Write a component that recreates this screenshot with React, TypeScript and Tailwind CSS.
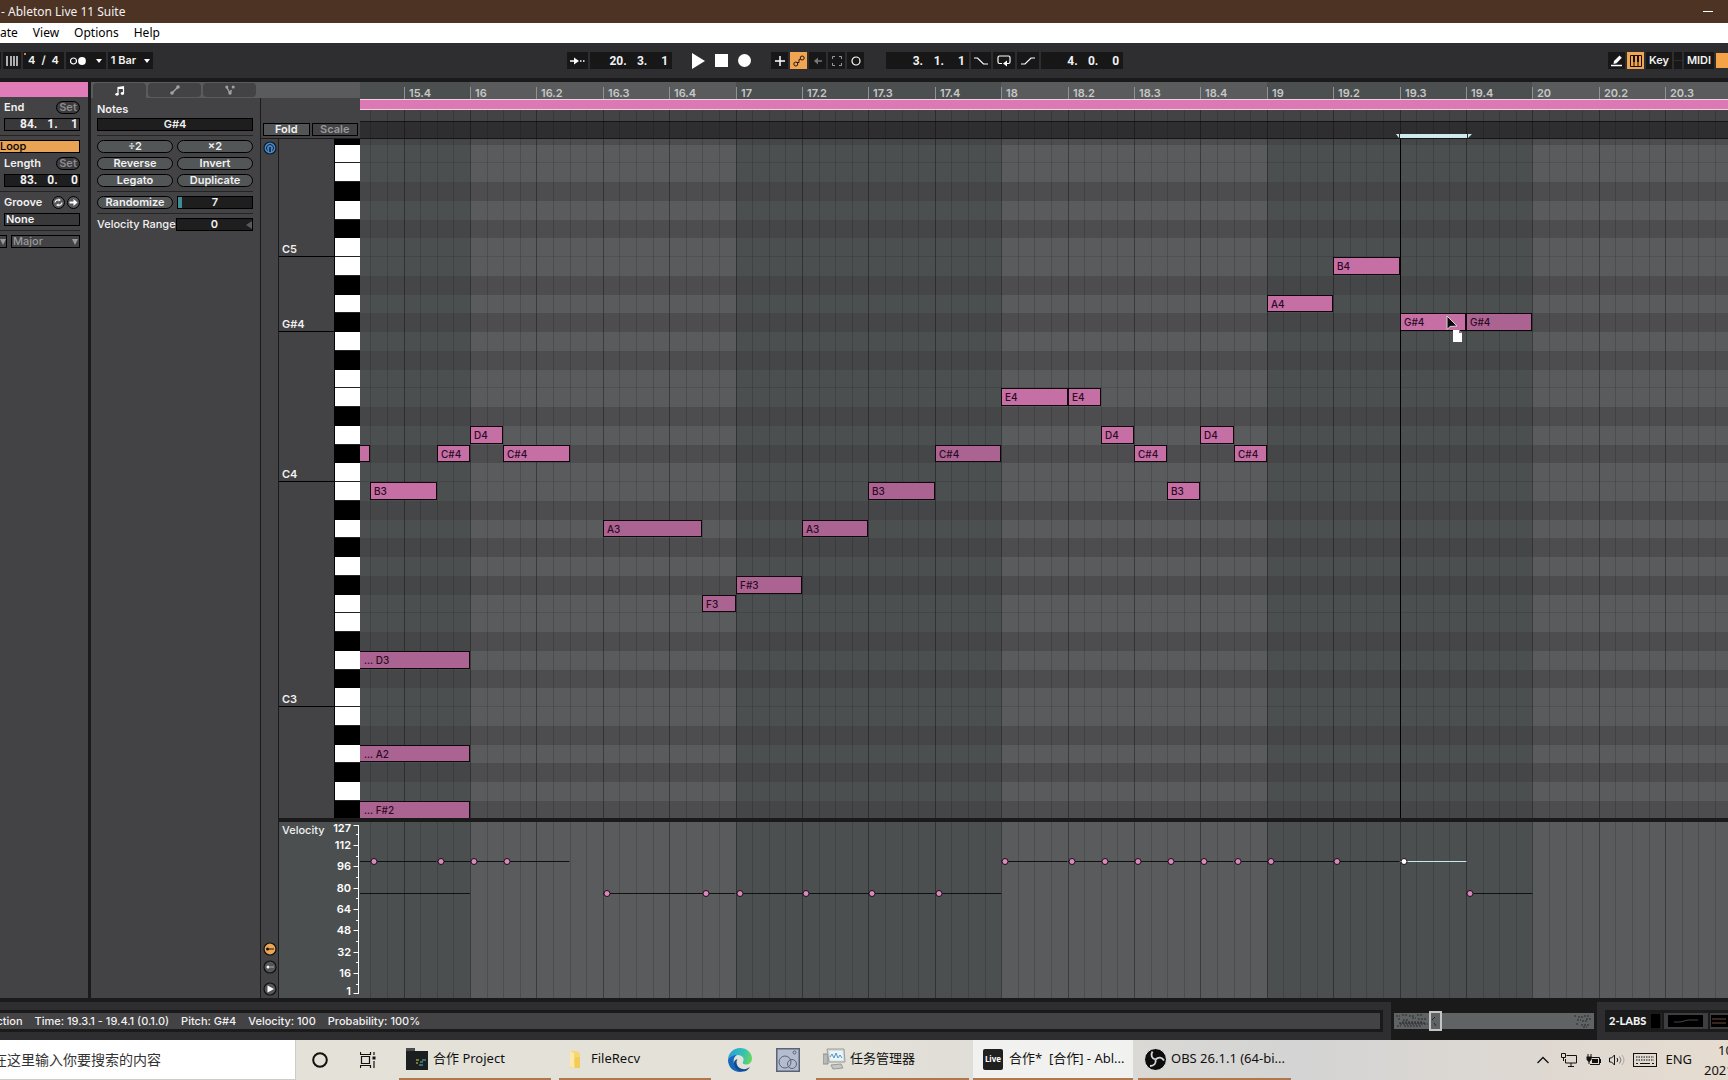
import type { ReactNode } from "react";
import clsx from "clsx";

const STEP = 16.6; // width of a sixteenth
const ORIGIN = 110; // x of bar 16 inside the lanes
const ROW = 18.75;
const TOP_PITCH = 78;
const NAMES = ["C", "C#", "D", "D#", "E", "F", "F#", "G", "G#", "A", "A#", "B"];

const x = (step: number) => Math.round(ORIGIN + step * STEP);
const y = (pitch: number) => Math.round(118 + (71 - pitch) * ROW);
const velY = (v: number) => Math.round(171 - ((v - 1) * 168) / 126);
const isBlack = (pitch: number) => NAMES[pitch % 12].includes("#");
const noteName = (pitch: number) =>
  NAMES[pitch % 12] + (Math.floor(pitch / 12) - 1);

const rows = Array.from({ length: 42 }, (_, i) => {
  const pitch = TOP_PITCH - i;
  const top = Math.max(0, y(pitch));
  return { pitch, height: y(pitch - 1) - top };
});

type Note = { start: number; len: number; pitch: number; vel: number };

const notes: Note[] = [
  { start: -8, len: 2, pitch: 61, vel: 100 },
  { start: -6, len: 4, pitch: 59, vel: 100 },
  { start: -2, len: 2, pitch: 61, vel: 100 },
  { start: 0, len: 2, pitch: 62, vel: 100 },
  { start: 2, len: 4, pitch: 61, vel: 100 },
  { start: 8, len: 6, pitch: 57, vel: 76 },
  { start: 14, len: 2, pitch: 53, vel: 76 },
  { start: 16, len: 4, pitch: 54, vel: 76 },
  { start: 20, len: 4, pitch: 57, vel: 76 },
  { start: 24, len: 4, pitch: 59, vel: 76 },
  { start: 28, len: 4, pitch: 61, vel: 76 },
  { start: 32, len: 4, pitch: 64, vel: 100 },
  { start: 36, len: 2, pitch: 64, vel: 100 },
  { start: 38, len: 2, pitch: 62, vel: 100 },
  { start: 40, len: 2, pitch: 61, vel: 100 },
  { start: 42, len: 2, pitch: 59, vel: 100 },
  { start: 44, len: 2, pitch: 62, vel: 100 },
  { start: 46, len: 2, pitch: 61, vel: 100 },
  { start: 48, len: 4, pitch: 69, vel: 100 },
  { start: 52, len: 4, pitch: 71, vel: 100 },
  { start: 56, len: 4, pitch: 68, vel: 100 },
  { start: 60, len: 4, pitch: 68, vel: 76 },
  { start: -16, len: 16, pitch: 50, vel: 76 },
  { start: -16, len: 16, pitch: 45, vel: 76 },
  { start: -16, len: 16, pitch: 42, vel: 76 },
];

const SELECTED = 56;

function BarShades() {
  return (
    <>
      {[-16, 0, 16, 32, 48, 64].map((start) => {
        const left = Math.max(0, x(start));
        const end = start === 64 ? 4000 : x(start + 16);
        return (
          <div
            key={start}
            className={clsx(
              "absolute inset-y-0",
              (start / 16) % 2 === 0 ? "bg-[#595b5c]" : "bg-[#4b4f50]",
            )}
            style={{ left, width: end - left }}
          />
        );
      })}
    </>
  );
}

function GridLines() {
  return (
    <>
      {Array.from({ length: 170 }, (_, i) => i - 6).map((s) => (
        <div
          key={s}
          className={clsx(
            "absolute inset-y-0 w-px",
            s % 4 === 0 ? "bg-black/35" : "bg-black/15",
          )}
          style={{ left: x(s) }}
        />
      ))}
    </>
  );
}

function Ruler() {
  return (
    <div className="relative h-[17px] overflow-hidden">
      <BarShades />
      {Array.from({ length: 20 }, (_, i) => i - 1).map((beat) => {
        const bar = 16 + Math.floor(beat / 4);
        const sub = ((beat + 4) % 4) + 1;
        return (
          <div
            key={beat}
            className="absolute bottom-0 h-3 border-l border-[#8f9293] pl-1 text-[11px] leading-[13px] font-semibold text-[#c6c8c8]"
            style={{ left: x(beat * 4) }}
          >
            {sub === 1 ? bar : `${bar}.${sub}`}
          </div>
        );
      })}
    </div>
  );
}

function Roll() {
  return (
    <div className="relative min-h-0 flex-1 overflow-hidden">
      <BarShades />
      <div className="relative">
        {rows.map((r) => (
          <div
            key={r.pitch}
            className={clsx(
              isBlack(r.pitch) && "bg-[#3c3a3c]/40",
              (r.pitch % 12 === 0 || r.pitch % 12 === 5) &&
                "border-b border-black/10",
            )}
            style={{ height: r.height }}
          />
        ))}
      </div>
      <GridLines />
      {notes.map((n) => {
        const left = Math.max(-1, x(n.start));
        const clipped = n.start === -16;
        return (
          <div
            key={`${n.start}-${n.pitch}`}
            className={clsx(
              "absolute overflow-hidden border border-[#12060d] text-[10px] leading-4 font-medium whitespace-nowrap text-[#2b0a1f]",
              n.vel === 100 ? "bg-[#c56fa5]" : "bg-[#ab6492]",
              clipped ? "pl-1" : "pl-[3px]",
            )}
            style={{
              left,
              width: x(n.start + n.len) - left,
              top: y(n.pitch),
              height: y(n.pitch - 1) - y(n.pitch) - 1,
            }}
          >
            {n.start !== -8 && (clipped ? "... " : "") + noteName(n.pitch)}
          </div>
        );
      })}
      <div
        className="absolute inset-y-0 w-px bg-black"
        style={{ left: x(SELECTED) }}
      />
      <svg
        className="absolute h-8 w-5"
        style={{ left: x(SELECTED) + 46, top: y(68) + 2 }}
        viewBox="0 0 20 32"
      >
        <path
          d="M1 1v13.5l3.2-3 6.8-.5z"
          fill="#0c0c0c"
          stroke="#d8d8d8"
          strokeWidth="1"
        />
        <path d="M7 15h6l3 3v9H7z" fill="#fff" />
        <path d="M13 15v3h3z" fill="#777" />
      </svg>
    </div>
  );
}

function VelocityLane() {
  return (
    <div className="relative h-44 shrink-0 overflow-hidden">
      <BarShades />
      <GridLines />
      <svg className="absolute inset-0 h-full w-full">
        {notes.map((n) => (
          <rect
            key={`l${n.start}-${n.pitch}`}
            x={x(n.start)}
            y={velY(n.vel)}
            width={n.len * STEP}
            height="1"
            fill={n.start === SELECTED ? "#c9e6ec" : "#111"}
          />
        ))}
        {notes.map((n) => (
          <circle
            key={`c${n.start}-${n.pitch}`}
            cx={x(n.start) + 4}
            cy={velY(n.vel) + 0.5}
            r="3"
            fill={n.start === SELECTED ? "#fff" : "#d98abb"}
            stroke="#1c0d16"
          />
        ))}
      </svg>
    </div>
  );
}

function VelocityScale() {
  const labels = [127, 112, 96, 80, 64, 48, 32, 16, 1];
  return (
    <div className="flex h-44 shrink-0 justify-between bg-[#4b4f50] pl-[3px] text-[11px]">
      <span className="w-0 pt-0.5 leading-3 font-medium">Velocity</span>
      <svg className="h-44 w-9" viewBox="0 0 36 176">
        <path d="M34.5 3v169" stroke="#fff" />
        {labels.map((v) => (
          <g key={v}>
            <path d={`M29.5 ${velY(v) + 0.5}h5`} stroke="#fff" />
            <text
              x="27"
              y={velY(v) + (v === 127 ? 7 : v === 1 ? 2 : 4)}
              textAnchor="end"
              fill="#fff"
              fontSize="11"
              fontWeight="600"
            >
              {v}
            </text>
          </g>
        ))}
        {[120, 104, 88, 72, 56, 40, 24, 8].map((v) => (
          <path key={v} d={`M32 ${velY(v) + 0.5}h3`} stroke="#fff" />
        ))}
      </svg>
    </div>
  );
}

function Pill({ children, dim }: { children: ReactNode; dim?: boolean }) {
  return (
    <button
      className={clsx(
        "h-[13px] rounded-full border border-black text-center text-[11px] leading-[11px] font-semibold",
        dim ? "w-6 bg-[#3c3b3d] text-[#8c8c8e]" : "flex-1 bg-[#535657] text-[#f1f1f1]",
      )}
    >
      {children}
    </button>
  );
}

function Position({ parts, className }: { parts: string[]; className?: string }) {
  return (
    <div className={clsx("flex font-['Roboto'] font-bold", className)}>
      {parts.map((p, i) => (
        <span key={i} className="flex-1 text-right whitespace-pre">
          {p}
        </span>
      ))}
    </div>
  );
}

const Rule = () => <hr className="h-px border-0 bg-[#232324]" />;

function ClipPanel() {
  return (
    <div className="flex w-[88px] shrink-0 flex-col overflow-hidden text-[11px] leading-[13px] font-semibold">
      <div className="h-[15px] bg-[#e07cb8]" />
      <div className="flex flex-col gap-1 pt-1 pr-2">
        <div className="flex justify-between pl-1">
          <span>End</span>
          <Pill dim>Set</Pill>
        </div>
        <Position
          parts={["84.", "1.", "1"]}
          className="ml-1 h-[13px] border border-black bg-[#39383a] pr-px pl-3 text-[12px] leading-[11px]"
        />
        <Rule />
        <button className="h-[13px] border border-l-0 border-black bg-[#e8a355] text-left text-[11px] leading-[11px] font-medium text-black">
          Loop
        </button>
        <div className="flex justify-between pl-1">
          <span>Length</span>
          <Pill dim>Set</Pill>
        </div>
        <Position
          parts={["83.", "0.", "0"]}
          className="ml-1 h-[13px] border border-black bg-[#1e1e1f] pr-px pl-3 text-[12px] leading-[11px]"
        />
        <Rule />
        <div className="flex h-[13px] items-center justify-between pl-1">
          <span className="w-0">Groove</span>
          <span className="flex gap-0.5">
            <button aria-label="Hot-swap groove">
              <svg className="size-[13px]" viewBox="0 0 13 13">
                <circle cx="6.5" cy="6.5" r="6" fill="#59595b" stroke="#000" />
                <path
                  d="M3 6.5a3 3 0 0 1 4-2.5M10 6.5a3 3 0 0 1-4 2.5"
                  fill="none"
                  stroke="#fff"
                  strokeWidth="1.2"
                />
                <path d="M6.5 2.500l2.500 1.500-2.500 1.500zM6.5 7.500l-2.500 1.500 2.500 1.500z" fill="#fff" />
              </svg>
            </button>
            <button aria-label="Commit groove">
              <svg className="size-[13px]" viewBox="0 0 13 13">
                <circle cx="6.5" cy="6.5" r="6" fill="#59595b" stroke="#000" />
                <path d="M2.5 6.5h5" stroke="#fff" strokeWidth="2" />
                <path d="M6.5 3l4 3.5-4 3.5z" fill="#fff" />
              </svg>
            </button>
          </span>
        </div>
        <div className="ml-1 h-[13px] border border-black bg-[#39383a] pl-px leading-[11px]">
          None
        </div>
        <Rule />
        <div className="flex gap-1 text-[#98989a]">
          <span className="flex h-[13px] w-[7px] items-center justify-end border border-l-0 border-black">
            <svg className="h-1.5 w-1.5 shrink-0" viewBox="0 0 6 6">
              <path d="M0 0h6L3 6z" fill="currentColor" />
            </svg>
          </span>
          <span className="flex h-[13px] flex-1 items-center justify-between border border-black px-px leading-[11px] font-medium">
            Major
            <svg className="h-1.5 w-1.5" viewBox="0 0 6 6">
              <path d="M0 0h6L3 6z" fill="currentColor" />
            </svg>
          </span>
        </div>
      </div>
    </div>
  );
}

function NotesPanel() {
  return (
    <div className="flex w-[170px] shrink-0 flex-col gap-1 border-r border-[#1a1a1b] pt-[3px] pr-[7px] pl-1.5 text-[11px] leading-[13px] font-semibold">
      <div className="h-[13px] leading-4">Notes</div>
      <div className="h-[13px] border border-black bg-[#1e1e1f] text-center leading-[11px]">
        G#4
      </div>
      <Rule />
      <div className="flex gap-1">
        <Pill>÷2</Pill>
        <Pill>×2</Pill>
      </div>
      <div className="flex gap-1">
        <Pill>Reverse</Pill>
        <Pill>Invert</Pill>
      </div>
      <div className="flex gap-1">
        <Pill>Legato</Pill>
        <Pill>Duplicate</Pill>
      </div>
      <Rule />
      <div className="flex gap-1">
        <Pill>Randomize</Pill>
        <div className="flex h-[13px] flex-1 border border-black bg-[#1e1e1f] leading-[11px]">
          <span className="w-1 bg-[#3d8e94]" />
          <span className="flex-1 pr-1 text-center">7</span>
        </div>
      </div>
      <Rule />
      <div className="flex gap-1">
        <span className="w-0 flex-1 font-medium whitespace-nowrap">
          Velocity Range
        </span>
        <div className="flex h-[13px] flex-1 items-center border border-black bg-[#1e1e1f] leading-[11px]">
          <span className="flex-1 pl-1.5 text-center">0</span>
          <svg className="h-2 w-1.5" viewBox="0 0 6 8">
            <path d="M6 0v8L0 4z" fill="#59595b" />
          </svg>
        </div>
      </div>
    </div>
  );
}

function TabStrip() {
  const tab =
    "flex h-3.5 w-[53px] items-center justify-center rounded bg-[#434244] text-[#a2a3a4]";
  return (
    <div className="flex h-4 items-start gap-0.5 bg-[#595b5c] pt-px pl-0.5">
      <button
        aria-label="Notes"
        className="flex h-[15px] w-[53px] items-center justify-center rounded-t bg-[#434244] text-white"
      >
        <svg className="h-2.5 w-2.5" viewBox="0 0 10 10">
          <path
            d="M3 8V1.5L8.5.8V7"
            fill="none"
            stroke="currentColor"
            strokeWidth="1.2"
          />
          <path d="M3 1h5.500v2H3z" fill="currentColor" />
          <ellipse cx="2" cy="8.300" rx="1.700" ry="1.400" fill="currentColor" />
          <ellipse cx="7.400" cy="7.500" rx="1.700" ry="1.400" fill="currentColor" />
        </svg>
      </button>
      <button aria-label="Envelopes" className={tab}>
        <svg className="h-2.5 w-2.5" viewBox="0 0 10 10">
          <path d="M2 8l6-6" stroke="currentColor" strokeWidth="1.4" />
          <circle cx="2" cy="8" r="1.800" fill="currentColor" />
          <circle cx="8" cy="2" r="1.800" fill="currentColor" />
        </svg>
      </button>
      <button aria-label="MPE" className={tab}>
        <svg className="h-2.5 w-2.5" viewBox="0 0 10 10">
          <path
            d="M1.500 2L5 8l1.500-3M8.500 2L8 3"
            fill="none"
            stroke="currentColor"
            strokeWidth="1.4"
          />
          <circle cx="1.800" cy="2" r="1.500" fill="currentColor" />
          <circle cx="8.200" cy="2" r="1.500" fill="currentColor" />
          <circle cx="5" cy="8" r="1.700" fill="currentColor" />
        </svg>
      </button>
    </div>
  );
}

function IconColumn() {
  return (
    <div className="flex w-[18px] shrink-0 flex-col items-center border-r border-[#1a1a1b] pt-0.5 pb-0.5">
      <button aria-label="Preview">
        <svg className="size-3.5" viewBox="0 0 14 14">
          <circle cx="7" cy="7" r="6" fill="#4a86c4" stroke="#0d1a2a" strokeWidth="1.2" />
          <path
            d="M4.500 9.500a3.500 3.500 0 1 1 5 0"
            fill="none"
            stroke="#0e2440"
            strokeWidth="1"
          />
          <path d="M7 6v5" stroke="#0e2440" strokeWidth="1.600" />
        </svg>
      </button>
      <div className="flex-1" />
      <button aria-label="Velocity lane" className="mb-1">
        <svg className="size-3.5" viewBox="0 0 14 14">
          <circle cx="7" cy="7" r="6" fill="#eba556" stroke="#111" strokeWidth="1.200" />
          <path d="M4 7h7" stroke="#221405" />
          <circle cx="4.500" cy="7" r="1.500" fill="#221405" />
        </svg>
      </button>
      <button aria-label="Chance lane" className="mb-2">
        <svg className="size-3.5" viewBox="0 0 14 14">
          <circle cx="7" cy="7" r="6" fill="#535657" stroke="#111" strokeWidth="1.200" />
          <circle cx="5" cy="7" r="1.500" fill="#fff" />
          <path d="M7.500 7h1M9.500 7h1" stroke="#fff" />
        </svg>
      </button>
      <button aria-label="Show lanes">
        <svg className="size-3.5" viewBox="0 0 14 14">
          <circle cx="7" cy="7" r="6" fill="#535657" stroke="#111" strokeWidth="1.200" />
          <path d="M4.500 3.500v7L11 7z" fill="#fff" />
        </svg>
      </button>
    </div>
  );
}

function Keyboard() {
  return (
    <div className="flex min-h-0 flex-1 overflow-hidden">
      <div className="w-[55px] shrink-0 text-[11px] leading-3 font-semibold">
        {rows.map((r) => {
          const labelled = r.pitch % 12 === 0 || r.pitch === 68;
          return (
            <div
              key={r.pitch}
              className={clsx(
                "flex items-end pb-px pl-[3px]",
                labelled && "border-b border-black",
              )}
              style={{ height: r.height }}
            >
              {labelled && noteName(r.pitch)}
            </div>
          );
        })}
      </div>
      <div className="flex-1 border-l border-black">
        {rows.map((r) => (
          <div
            key={r.pitch}
            className={
              isBlack(r.pitch) ? "bg-black" : "border-b border-[#222] bg-white"
            }
            style={{ height: r.height }}
          />
        ))}
      </div>
    </div>
  );
}

function ClipEditor() {
  return (
    <div className="flex min-h-0 flex-1">
      <ClipPanel />
      <div className="w-[3px] shrink-0 bg-[#1a1a1b]" />
      <div className="flex w-[269px] shrink-0 flex-col">
        <TabStrip />
        <div className="flex min-h-0 flex-1">
          <NotesPanel />
          <div className="flex min-w-0 flex-1 flex-col">
            <div className="flex h-[41px] items-end gap-0.5 border-b border-[#1a1a1b] px-0.5 pb-0.5 text-[11px] leading-[11px] font-semibold">
              <button className="h-[13px] flex-1 border border-black bg-[#535657]">
                Fold
              </button>
              <button className="h-[13px] flex-1 border border-black text-[#98989a]">
                Scale
              </button>
            </div>
            <div className="flex min-h-0 flex-1">
              <IconColumn />
              <div className="flex min-w-0 flex-1 flex-col">
                <Keyboard />
                <div className="h-1 shrink-0 bg-[#1a1a1b]" />
                <VelocityScale />
              </div>
            </div>
          </div>
        </div>
      </div>
      <div className="flex min-w-0 flex-1 flex-col">
        <Ruler />
        <div className="h-[11px] border-y border-[#f0cfe2] bg-[#dc79b5]" />
        <div className="relative h-3 overflow-hidden border-b border-[#151515]">
          <GridLines />
        </div>
        <div className="relative h-[17px] overflow-hidden border-b border-[#151515] bg-[#2e2d2f]">
          <GridLines />
          <svg
            className="absolute bottom-0 h-1 w-[76px]"
            style={{ left: x(SELECTED) - 4 }}
            viewBox="0 0 76 4"
          >
            <path d="M4 0h67v4H4zM0 0h3v4zM76 0h-4v4z" fill="#cfe9ee" />
          </svg>
        </div>
        <Roll />
        <div className="h-1 shrink-0 bg-[#1a1a1b]" />
        <VelocityLane />
      </div>
    </div>
  );
}

const box = "flex h-[17px] items-center justify-center bg-[#171717]";

function Caret() {
  return (
    <svg className="h-1 w-1.5" viewBox="0 0 6 4">
      <path d="M0 0h6L3 4z" fill="#fff" />
    </svg>
  );
}

function ControlBar() {
  return (
    <div className="flex h-[35px] shrink-0 items-center overflow-hidden bg-[#2e2d2f] text-[11px] font-semibold">
      <div className="flex gap-0.5">
        <div className="h-[17px] w-px bg-[#171717]" />
        <button aria-label="Metronome" className={clsx(box, "w-[18px]")}>
          <svg className="h-2.5 w-3" viewBox="0 0 12 10">
            <path
              d="M1 0v10M5 0v10M8 0v10M11 0v10"
              stroke="#fff"
              strokeWidth="1.300"
            />
          </svg>
        </button>
        <div className={clsx(box, "relative w-[41px] gap-1.5")}>
          <span>4</span>
          <span>/</span>
          <span>4</span>
          <i className="absolute top-px left-px size-0.5 bg-[#e07a50]" />
        </div>
        <button aria-label="Groove amount" className={clsx(box, "w-10 gap-2.5")}>
          <svg className="h-2 w-4" viewBox="0 0 16 8">
            <circle cx="3.500" cy="4" r="3" fill="none" stroke="#fff" strokeWidth="1.200" />
            <circle cx="12" cy="4" r="3.900" fill="#fff" />
          </svg>
          <Caret />
        </button>
        <button className={clsx(box, "w-[45px] gap-2 whitespace-nowrap")}>
          1 Bar
          <Caret />
        </button>
      </div>
      <div className="ml-[414px] flex gap-0.5">
        <button aria-label="Follow" className={clsx(box, "w-[21px]")}>
          <svg className="h-2 w-4" viewBox="0 0 16 8">
            <path d="M0 4h5M10 4h1.500M13 4h1.500" stroke="#fff" strokeWidth="1.500" />
            <path d="M4 .5L9 4 4 7.500z" fill="#fff" />
          </svg>
        </button>
        <Position
          parts={["20.", "3.", "1"]}
          className="h-[17px] w-[82px] items-center bg-[#171717] pr-1 pl-4 text-[12px]"
        />
      </div>
      <div className="ml-5 flex items-center gap-2.5">
        <button aria-label="Play">
          <svg className="h-4 w-[13px]" viewBox="0 0 13 16">
            <path d="M0 0l13 8-13 8z" fill="#fff" />
          </svg>
        </button>
        <button aria-label="Stop" className="size-[13px] bg-white" />
        <button aria-label="Record" className="size-[13px] rounded-full bg-white" />
      </div>
      <div className="ml-5 flex gap-0.5">
        <button aria-label="Overdub" className={clsx(box, "w-[17px]")}>
          <svg className="size-2.5" viewBox="0 0 10 10">
            <path d="M5 0v10M0 5h10" stroke="#fff" strokeWidth="1.500" />
          </svg>
        </button>
        <button
          aria-label="Automation arm"
          className="flex h-[17px] w-[17px] items-center justify-center bg-[#f0a555]"
        >
          <svg className="size-3" viewBox="0 0 12 12" fill="none" stroke="#2a1604">
            <circle cx="2.800" cy="9" r="2" />
            <circle cx="9.200" cy="3" r="2" />
            <path d="M4 7.500h2v-3h1.500" />
          </svg>
        </button>
        <button aria-label="Re-enable automation" className={clsx(box, "w-[17px]")}>
          <svg className="h-2 w-2.5" viewBox="0 0 10 8">
            <path d="M3 4h6" stroke="#77787a" strokeWidth="1.500" />
            <path d="M5 .5L1 4l4 3.500z" fill="#77787a" />
          </svg>
        </button>
        <button aria-label="Capture" className={clsx(box, "w-[17px]")}>
          <svg className="size-2.5" viewBox="0 0 10 10" fill="none" stroke="#9a9b9c">
            <path d="M.5 3V.5H3M7 .5h2.500V3M9.500 7v2.500H7M3 9.500H.5V7" />
          </svg>
        </button>
        <button aria-label="Session record" className={clsx(box, "w-[17px]")}>
          <svg className="size-2.5" viewBox="0 0 10 10">
            <circle cx="5" cy="5" r="4" fill="none" stroke="#fff" strokeWidth="1.200" />
          </svg>
        </button>
      </div>
      <div className="ml-[22px] flex gap-0.5">
        <Position
          parts={["3.", "1.", "1"]}
          className="h-[17px] w-[83px] items-center bg-[#171717] pr-1 pl-4 text-[12px]"
        />
        <button aria-label="Punch in" className={clsx(box, "w-5")}>
          <svg className="h-2 w-3.5" viewBox="0 0 14 8" fill="none" stroke="#fff">
            <path d="M0 1h3.500l6 6H14" strokeWidth="1.200" />
          </svg>
        </button>
        <button aria-label="Loop" className={clsx(box, "w-[22px]")}>
          <svg className="h-3 w-3.5" viewBox="0 0 14 12">
            <path
              d="M5 8.500H2.500a1.500 1.500 0 0 1-1.500-1.500V2.500A1.500 1.500 0 0 1 2.500 1h9A1.500 1.500 0 0 1 13 2.500V7a1.500 1.500 0 0 1-1.500 1.500H9"
              fill="none"
              stroke="#fff"
              strokeWidth="1.200"
            />
            <path d="M10 5.500v6L6 8.500z" fill="#fff" />
          </svg>
        </button>
        <button aria-label="Punch out" className={clsx(box, "w-[22px]")}>
          <svg className="h-2 w-3.5" viewBox="0 0 14 8" fill="none" stroke="#fff">
            <path d="M0 7h4l6-6h4" strokeWidth="1.200" />
          </svg>
        </button>
        <Position
          parts={["4.", "0.", "0"]}
          className="h-[17px] w-[82px] items-center bg-[#171717] pr-1 pl-4 text-[12px]"
        />
      </div>
      <div className="ml-auto flex gap-0.5">
        <button aria-label="Draw mode" className={clsx(box, "w-[17px]")}>
          <svg className="h-3 w-3" viewBox="0 0 12 12">
            <path d="M2.500 9l.5-3L8.500.5l2.300 2.300L5.500 8.300z" fill="#fff" />
            <path d="M0 10.500h11" stroke="#fff" strokeWidth="1.500" />
          </svg>
        </button>
        <button
          aria-label="Computer MIDI keyboard"
          className="flex h-[17px] w-[17px] items-center justify-center bg-[#f0a555]"
        >
          <svg className="h-3 w-3" viewBox="0 0 12 12">
            <path
              d="M.5 .5h11v11H.5zM4 6v5.500M8 6v5.500"
              fill="none"
              stroke="#1a0f04"
            />
            <path d="M3 1h2v6H3zM7 1h2v6H7z" fill="#1a0f04" />
          </svg>
        </button>
        <button className={clsx(box, "w-[26px]")}>Key</button>
        <div className={clsx(box, "w-2 flex-col gap-px")}>
          <i className="h-px w-full bg-[#2e2d2f]" />
        </div>
        <button className={clsx(box, "w-[30px]")}>MIDI</button>
        <div className="h-[15px] w-3 self-center bg-[#f5a347]" />
      </div>
    </div>
  );
}

function StatusBar() {
  return (
    <div className="flex h-[42px] shrink-0 border-t-4 border-[#1a1a1b] bg-[#2e2d2f]">
      <div className="min-w-0 flex-1 py-2 pr-2">
        <div className="flex h-[22px] gap-3 overflow-hidden border-3 border-l-0 border-[#1a1a1b] bg-[#434244] text-[11px] leading-4 font-medium whitespace-nowrap">
          <span className="-ml-2.5">ection</span>
          <span>Time: 19.3.1 - 19.4.1 (0.1.0)</span>
          <span>Pitch: G#4</span>
          <span>Velocity: 100</span>
          <span>Probability: 100%</span>
        </div>
      </div>
      <div className="w-[206px] bg-[#1a1a1b] px-[3px] pt-[9px]">
        <svg className="h-5 w-[200px]" viewBox="0 0 200 20">
          <rect y="2" width="200" height="16" fill="#5f6364" />
          <path
            d="M2 5h4M8 4h5M15 5h6M23 4h5M4 8h3M9 9h6M18 7h4M24 8h8M5 12h26M6 13h28M8 11h20M3 15h4M10 15h18M180 5h3M184 6h5M190 5h5M183 9h4M188 10h6M182 13h3M187 14h8M192 8h5M189 16h4"
            stroke="#2a2b2c"
            strokeDasharray="2 1"
          />
          <path d="M38 9l3-3M40 12l2 3" stroke="#2a2b2c" />
          <rect x="36" y="1" width="11" height="18" fill="none" stroke="#c3c4c4" strokeWidth="2" />
        </svg>
      </div>
      <div className="w-[131px] py-2 pl-2">
        <div className="flex h-[22px] items-center gap-1 overflow-hidden bg-[#1a1a1b] pl-1 font-['Lato'] text-[11px] font-black whitespace-nowrap">
          2-LABS
          <svg className="h-4 w-[80px] shrink-0" viewBox="0 0 80 16">
            <rect width="11" height="16" fill="#000" stroke="#333" />
            <rect x="14" width="44" height="16" fill="#3d3e3f" />
            <rect x="18" y="2" width="35" height="12" fill="#000" />
            <path d="M24 9h6l8-2h10" stroke="#444" fill="none" />
            <rect x="60" width="20" height="16" fill="#3d3e3f" />
            <rect x="61" y="2" width="18" height="12" fill="#000" />
            <path d="M62 6h14M62 10h14" stroke="#6a4a3c" />
          </svg>
        </div>
      </div>
    </div>
  );
}

function Task({
  icon,
  label,
  active,
  className,
}: {
  icon: ReactNode;
  label: string;
  active?: boolean;
  className?: string;
}) {
  return (
    <button
      className={clsx(
        "flex h-10 shrink-0 items-center border-b-2 border-[#b0764c] text-left whitespace-pre",
        active ? "bg-[#f1f1ef]" : "",
        className,
      )}
    >
      {icon}
      {label}
    </button>
  );
}

function TaskBar() {
  return (
    <div className="flex h-10 shrink-0 items-center overflow-hidden bg-linear-to-r from-[#e3e1d8] from-50% via-[#d4d4d4] via-75% to-[#e6dcd0] font-['Noto_Sans','Noto_Sans_CJK_SC',sans-serif] text-[13px] text-[#111]">
      <input
        aria-label="Search"
        placeholder="在这里输入你要搜索的内容"
        className="-ml-[7px] h-10 w-[303px] shrink-0 border-r border-b border-[#cfccc5] bg-white text-[14px] placeholder:text-[#333]"
      />
      <button aria-label="Cortana" className="ml-4">
        <svg className="size-4" viewBox="0 0 16 16">
          <circle cx="8" cy="8" r="6.800" fill="none" stroke="#111" strokeWidth="2" />
        </svg>
      </button>
      <button aria-label="Task view" className="ml-8">
        <svg className="size-4" viewBox="0 0 16 16" fill="none" stroke="#111">
          <path d="M.5 0v2.500h10V0M.5 16v-2.500h10V16M1.500 4.500h8v7h-8zM14 0v3M14 9v7" strokeWidth="1.200" />
          <rect x="12.500" y="4.500" width="3" height="3" fill="#111" stroke="none" />
        </svg>
      </button>
      <Task
        className="ml-[23px] w-[152px] gap-[5px] pl-[7px]"
        label="合作 Project"
        icon={
          <svg className="h-[22px] w-[22px]" viewBox="0 0 22 22">
            <path d="M0 0h9v3h13v19H0z" fill="#1c1f1f" />
            <path d="M0 0h9v3H0z" fill="#4a4a48" />
            <path d="M10 12h3M10 15h2" stroke="#d8d44a" />
            <path d="M14 14h3M16 12h4M13 17h4" stroke="#5bb7c4" />
          </svg>
        }
      />
      <Task
        className="ml-2 w-[152px] gap-2.5 pl-2.5"
        label="FileRecv"
        icon={
          <svg className="h-[19px] w-3" viewBox="0 0 12 19">
            <path d="M1 1h6l4 2v15H1z" fill="#f7d774" />
            <path d="M1 1l4 2v15l-4-1z" fill="#fbe9a9" />
            <path d="M6 7h5v11H6z" fill="#f3cb58" />
          </svg>
        }
      />
      <button aria-label="Microsoft Edge" className="ml-[17px]">
        <svg className="size-6" viewBox="0 0 24 24">
          <defs>
            <linearGradient id="edgeTop" x1="0" y1="0.4" x2="1" y2="0.6">
              <stop offset="0" stopColor="#2b9fd9" />
              <stop offset="0.600" stopColor="#35c1b4" />
              <stop offset="1" stopColor="#6bd65a" />
            </linearGradient>
          </defs>
          <path
            d="M0 12C0 5 5.500 0 12 0c7 0 12 5 12 10.500 0 4-3 6-6 6-2.500 0-4-1-3-2.500C17 10 14 7 9.500 7 5 7 1 9 0 12z"
            fill="url(#edgeTop)"
          />
          <path
            d="M0 12c1-3 4.500-5 9-5-3 1.500-4 5-3 8.500C7.500 20 11 22.500 15 23c-1 .7-2 1-3 1C5 24 0 18.500 0 12z"
            fill="#1768b8"
          />
          <path
            d="M9.500 11c-2 3-1 8 4 9.800 3 1 6 .2 8.500-2-1.500 3-4 4.700-7 4.700-5 0-8.500-3.500-9-7.500-.3-2.500.8-4.500 3.500-5z"
            fill="#134a92"
          />
        </svg>
      </button>
      <button aria-label="Audio app" className="ml-6">
        <svg className="size-6" viewBox="0 0 24 24" fill="none" stroke="#5b6378">
          <rect x=".75" y=".75" width="22.500" height="22.500" fill="#b4bccf" strokeWidth="1.500" />
          <circle cx="9" cy="14" r="6" />
          <circle cx="16" cy="16" r="4.500" />
          <circle cx="18.500" cy="4.500" r="1.500" />
        </svg>
      </button>
      <Task
        className="ml-4 w-[153px] gap-1 pl-[7px]"
        label="任务管理器"
        icon={
          <svg className="h-[22px] w-[23px]" viewBox="0 0 23 22">
            <path d="M0 6h5v10H0z" fill="#b9b9b5" stroke="#8d8d89" />
            <path d="M4 1h17l1 13H6z" fill="#d9dbd9" stroke="#9a9c9a" />
            <path d="M6.500 3h13l.8 9.500H7.500z" fill="#eaf5fb" />
            <path d="M7 9l2-3 2 4 2-5 2 5 2-3 2 3" fill="none" stroke="#4f95c2" />
            <path d="M8 17l10-1 2 4-10 1z" fill="#c7c7c3" stroke="#999" />
          </svg>
        }
      />
      <Task
        active
        className="ml-1 w-[160px] gap-1.5 pl-2.5"
        label="合作*  [合作] - Abl..."
        icon={
          <span className="flex h-[21px] w-[20px] items-center justify-center rounded-xs bg-[#202020] text-[8px] font-bold text-white">
            Live
          </span>
        }
      />
      <Task
        className="ml-[5px] w-[153px] gap-1 pl-1.5"
        label="OBS 26.1.1 (64-bi..."
        icon={
          <svg className="size-[23px]" viewBox="0 0 23 23">
            <circle cx="11.500" cy="11.500" r="11" fill="#0d0d0d" stroke="#eee" />
            <g fill="none" stroke="#d6d6d6" strokeWidth="1.800">
              <path d="M11.500 11.500c-4-1-5-4.500-3-8" />
              <path d="M11.500 11.500c3-3 6.500-2.500 8.500 1" />
              <path d="M11.500 11.500c1 4-1.500 6.500-5.500 6.500" />
            </g>
          </svg>
        }
      />
      <div className="ml-auto flex shrink-0 items-center gap-2">
        <svg className="mr-1 h-2 w-3" viewBox="0 0 12 8">
          <path d="M.5 7L6 1.500 11.500 7" fill="none" stroke="#111" strokeWidth="1.300" />
        </svg>
        <svg className="h-3.5 w-4" viewBox="0 0 16 14" fill="none" stroke="#111">
          <path d="M5.500 2.500h10v7.500H4.500V6M10 10v3M7 13.500h6M.5.500h4v4h-4zM2.500 5v3" />
        </svg>
        <svg className="h-3 w-4" viewBox="0 0 16 12">
          <path d="M4.500 3.500h10v7H5M3 0v3M6 0v3" fill="none" stroke="#111" />
          <path d="M1.500 2.500h5v3l-2 2.500v2H3.500V8l-2-2.500zM7 5h6v4H7zM15 5h1v4h-1z" fill="#111" />
        </svg>
        <svg className="h-3 w-4" viewBox="0 0 16 12" fill="none" stroke="#111">
          <path d="M.5 4v4h2l3 3V1l-3 3zM8 4q1.500 2 0 4" />
          <path d="M10.500 2.500q3 3.500 0 7" stroke="#777" />
          <path d="M13 1q4 5 0 10" stroke="#aaa" />
        </svg>
        <svg className="h-3.5 w-6" viewBox="0 0 24 14" fill="none" stroke="#111">
          <rect x=".5" y=".5" width="23" height="13" />
          <path d="M3 4h18M3 7h18" strokeDasharray="1.500 1" />
          <path d="M3 10.500h2M7 10.500h10M19 10.500h2" />
        </svg>
        <span>ENG</span>
        <div className="ml-1 w-[24px] overflow-hidden leading-5 whitespace-nowrap">
          <div className="pl-3.5">10</div>
          <div>2021</div>
        </div>
      </div>
    </div>
  );
}

export default function App() {
  return (
    <div className="flex h-screen flex-col overflow-hidden bg-[#434244] font-['Inter',sans-serif] text-[#f1f1f1]">
      <div className="flex h-[23px] shrink-0 items-center justify-between bg-[#4c3324] pr-[15px] pl-px font-['Noto_Sans',sans-serif] text-[12px]">
        <span>- Ableton Live 11 Suite</span>
        <button aria-label="Minimize" className="h-px w-2.5 bg-white" />
      </div>
      <nav className="flex h-5 shrink-0 items-center gap-[15px] bg-white font-['Noto_Sans',sans-serif] text-[12px] leading-5 text-black">
        <a href="#create">ate</a>
        <a href="#view">View</a>
        <a href="#options">Options</a>
        <a href="#help">Help</a>
      </nav>
      <ControlBar />
      <div className="h-1 shrink-0 bg-[#1a1a1b]" />
      <ClipEditor />
      <StatusBar />
      <TaskBar />
    </div>
  );
}
